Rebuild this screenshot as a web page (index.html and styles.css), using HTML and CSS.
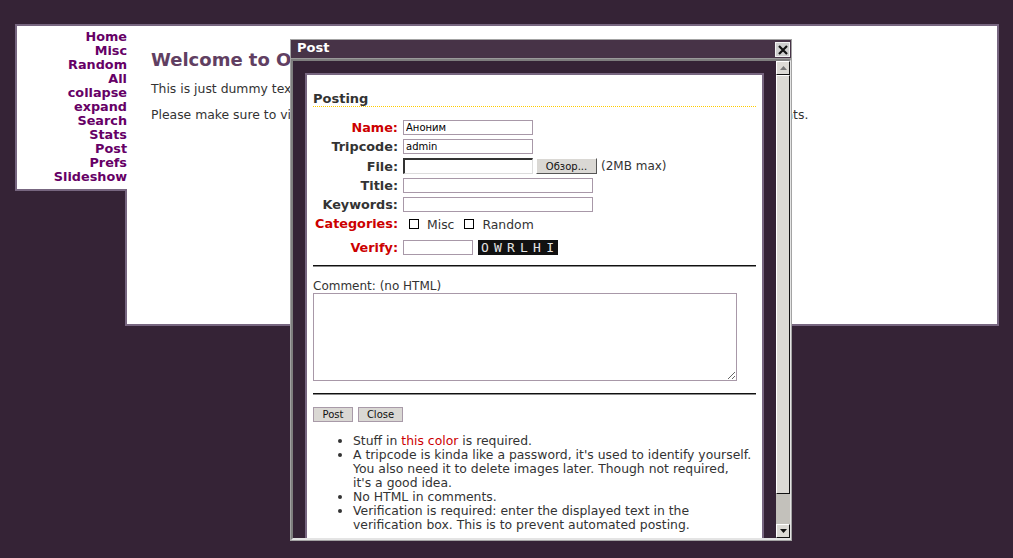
FILE: index.html
```html
<!DOCTYPE html>
<html>
<head>
<meta charset="utf-8">
<title>Post</title>
<link rel="stylesheet" href="styles.css">
</head>
<body>
<div class="page">
  <nav class="sidebar">
    <a href="#">Home</a>
    <a href="#">Misc</a>
    <a href="#">Random</a>
    <a href="#">All</a>
    <a href="#">collapse</a>
    <a href="#">expand</a>
    <a href="#">Search</a>
    <a href="#">Stats</a>
    <a href="#">Post</a>
    <a href="#">Prefs</a>
    <a href="#">Slideshow</a>
  </nav>
  <main class="main">
    <h1 class="welcome">Welcome to Our Image Gallery</h1>
    <p class="para">This is just dummy text that you should replace with your own.</p>
    <p class="para">Please make sure to visit the rules page and read the FAQ before you begin posting images or comments.</p>
  </main>
</div>

<div class="dialog">
  <div class="titlebar">
    <span class="title">Post</span>
    <span class="close"><svg width="10" height="10" viewBox="0 0 10 10"><path d="M1 1L9 9M9 1L1 9" stroke="#111" stroke-width="2.2"/></svg></span>
  </div>
  <div class="dialog-body">
    <div class="viewport">
      <div class="panel">
        <h2 class="posting">Posting</h2>
        <div class="form">
          <label class="lbl req">Name:</label>
          <div class="field"><input class="txt short" type="text" value="Аноним"></div>

          <label class="lbl">Tripcode:</label>
          <div class="field"><input class="txt short" type="text" value="admin"></div>

          <label class="lbl">File:</label>
          <div class="field file-field"><span class="file-box"></span><span class="btn browse">Обзор...</span><span class="note">(2MB max)</span></div>

          <label class="lbl">Title:</label>
          <div class="field"><input class="txt long" type="text"></div>

          <label class="lbl">Keywords:</label>
          <div class="field"><input class="txt long" type="text"></div>

          <label class="lbl req cat-lbl">Categories:</label>
          <div class="field cats"><span class="cb"></span><span class="cb-text">Misc</span><span class="cb"></span><span class="cb-text">Random</span></div>

          <label class="lbl req">Verify:</label>
          <div class="field"><input class="txt verify" type="text"><span class="captcha">OWRLHI</span></div>
        </div>
        <hr class="rule">
        <div class="comment-label">Comment: (no HTML)</div>
        <textarea class="comment"></textarea>
        <hr class="rule rule2">
        <div class="buttons"><span class="btn post">Post</span><span class="btn closebtn">Close</span></div>
        <ul class="notes">
          <li>Stuff in <span class="red">this color</span> is required.</li>
          <li>A tripcode is kinda like a password, it's used to identify yourself. You also need it to delete images later. Though not required,<br>it's a good idea.</li>
          <li>No HTML in comments.</li>
          <li>Verification is required: enter the displayed text in the verification box. This is to prevent automated posting.</li>
        </ul>
      </div>
    </div>
    <div class="scrollbar">
      <div class="sb-btn"><svg width="7" height="4" viewBox="0 0 7 4"><path d="M0 4L3.5 0L7 4Z" fill="#777"/></svg></div>
      <div class="sb-thumb"></div>
      <div class="sb-track"></div>
      <div class="sb-btn"><svg width="7" height="4" viewBox="0 0 7 4"><path d="M0 0L3.5 4L7 0Z" fill="#111"/></svg></div>
    </div>
  </div>
</div>
</body>
</html>
```

FILE: styles.css
```css
* { box-sizing: border-box; }
html, body { margin: 0; padding: 0; }
body {
  background: #352336;
  font-family: "DejaVu Sans", "Noto Sans", sans-serif;
  font-size: 12px;
  color: #333;
  width: 1013px;
  height: 558px;
  overflow: hidden;
  position: relative;
}
.page {
  display: flex;
  align-items: flex-start;
  padding: 24px 14px 0 15px;
}
.sidebar {
  position: relative;
  z-index: 1;
  width: 112px;
  margin-right: -2px;
  background: #fff;
  border: 2px solid #776680;
  border-right: none;
  padding: 4px 0 5px;
  display: flex;
  flex-direction: column;
  align-items: flex-end;
}
.sidebar a {
  display: block;
  color: #660066;
  font-weight: bold;
  font-size: 12.8px;
  line-height: 14px;
  text-decoration: none;
}
.main {
  flex: 1;
  background: #fff;
  border: 2px solid #776680;
  min-height: 302px;
  padding: 0 24px;
}
.welcome {
  margin: 23px 0 12px;
  font-size: 18px;
  line-height: 21px;
  color: #613f62;
  font-weight: bold;
  white-space: nowrap;
}
.para {
  margin: 0 0 12px;
  line-height: 14px;
  font-size: 12.4px;
}

/* dialog */
.dialog {
  position: absolute;
  left: 290px;
  top: 39px;
  width: 502px;
  height: 502px;
  border: 1px solid #a3a3a3;
  background: #352336;
  display: flex;
  flex-direction: column;
}
.titlebar {
  height: 19px;
  background: #473347;
  border-bottom: 1px solid #9a9a9a;
  display: flex;
  align-items: flex-start;
  justify-content: space-between;
  padding-left: 6px;
}
.title {
  color: #fff;
  font-weight: bold;
  font-size: 13px;
  line-height: 16px;
}
.close {
  width: 15px;
  height: 15px;
  margin: 2px 1px 0 0;
  background: #cfcfcf;
  border: 1px solid #f2f2f2;
  display: flex;
  align-items: center;
  justify-content: center;
}
.dialog-body {
  flex: 1;
  display: flex;
  border-top: 2px solid #7e7e7e;
  border-left: 2px solid #7e7e7e;
  border-bottom: 2px solid #e4e4e4;
  border-right: 1px solid #e4e4e4;
  min-height: 0;
}
.viewport {
  width: 483px;
  overflow: hidden;
  padding: 12px 12px 0 12px;
}
.panel {
  background: #fff;
  border: 2px solid #776680;
  padding: 0 6px 20px;
}
.posting {
  margin: 0;
  padding: 16px 0 1px;
  font-size: 13px;
  line-height: 15px;
  font-weight: bold;
  color: #333;
  background: repeating-linear-gradient(to right, #ffcc00 0 1px, transparent 1px 2px) left bottom / 100% 1px no-repeat;
}
.form {
  margin-top: 13px;
  display: grid;
  grid-template-columns: 85px auto;
  grid-template-rows: 15px 15px 16px 15px 15px 20px 15px;
  column-gap: 5px;
  row-gap: 4px;
  align-items: center;
}
.lbl {
  text-align: right;
  font-weight: bold;
  font-size: 12.8px;
  line-height: 15px;
  color: #333;
}
.lbl.req { color: #cc0000; }
.field {
  display: flex;
  align-items: center;
  height: 15px;
}
.txt {
  height: 15px;
  border: 1px solid #a898a8;
  padding: 0 2px;
  font-family: "DejaVu Sans", sans-serif;
  font-size: 10px;
  color: #000;
  background: #fff;
  outline: none;
  margin: 0;
}
.short { width: 130px; }
.long { width: 190px; }
.verify { width: 70px; }
.file-field { height: 16px; }
.file-box {
  display: inline-block;
  width: 130px;
  height: 16px;
  border-top: 2px solid #333;
  border-left: 2px solid #333;
  border-bottom: 1px solid #ddd;
  border-right: 1px solid #ddd;
  background: #fff;
}
.btn {
  display: inline-flex;
  align-items: center;
  justify-content: center;
  background: #dad8d4;
  border: 1px solid #a89aa8;
  font-size: 10px;
  color: #111;
  height: 15px;
}
.browse {
  width: 61px;
  height: 16px;
  margin-left: 3px;
  border-color: #fff #555 #555 #fff;
}
.note { margin-left: 4px; font-size: 12px; }
.cat-lbl, .cats { align-self: start; }
.cats { height: 16px; }
.cb {
  display: inline-block;
  width: 10px;
  height: 10px;
  border: 1px solid #000;
  background: #fff;
  margin-left: 6px;
  margin-right: 8px;
}
.cb + .cb-text + .cb { margin-left: 10px; }
.cb-text { font-size: 12.4px; }
.captcha {
  display: inline-block;
  margin-left: 5px;
  width: 80px;
  height: 15px;
  background: #111;
  color: #e4e4e4;
  font-family: "DejaVu Sans Mono", monospace;
  font-size: 13px;
  line-height: 15px;
  letter-spacing: 5.2px;
  padding-left: 3px;
  overflow: hidden;
}
.rule {
  margin: 10px 0 0;
  border: 0;
  border-top: 1px solid #111;
  border-bottom: 1px solid #8a8a8a;
  height: 0;
}
.rule2 { margin-top: 12px; }
.comment-label {
  margin-top: 12px;
  line-height: 14px;
  font-size: 12px;
}
.comment {
  display: block;
  width: 424px;
  height: 88px;
  margin: 0;
  border: 1px solid #a898a8;
  resize: both;
  outline: none;
}
.buttons {
  margin-top: 12px;
  display: flex;
  gap: 5px;
}
.post { width: 40px; }
.closebtn { width: 45px; }
.notes {
  margin: 12px 0 0;
  padding-left: 40px;
  line-height: 14px;
  font-size: 12.4px;
}
.red { color: #cc0000; }

.scrollbar {
  width: 14px;
  display: flex;
  flex-direction: column;
  background: #c3c1bb;
}
.sb-btn {
  height: 14px;
  background: #dcdad5;
  border-top: 1px solid #fff;
  border-left: 1px solid #fff;
  border-right: 1px solid #111;
  border-bottom: 1px solid #111;
  display: flex;
  align-items: center;
  justify-content: center;
}
.sb-thumb {
  height: 419px;
  background: #dcdad5;
  border-top: 1px solid #fff;
  border-left: 1px solid #fff;
  border-right: 1px solid #111;
  border-bottom: 1px solid #111;
}
.sb-track { flex: 1; background: #c3c1bb; }
```
